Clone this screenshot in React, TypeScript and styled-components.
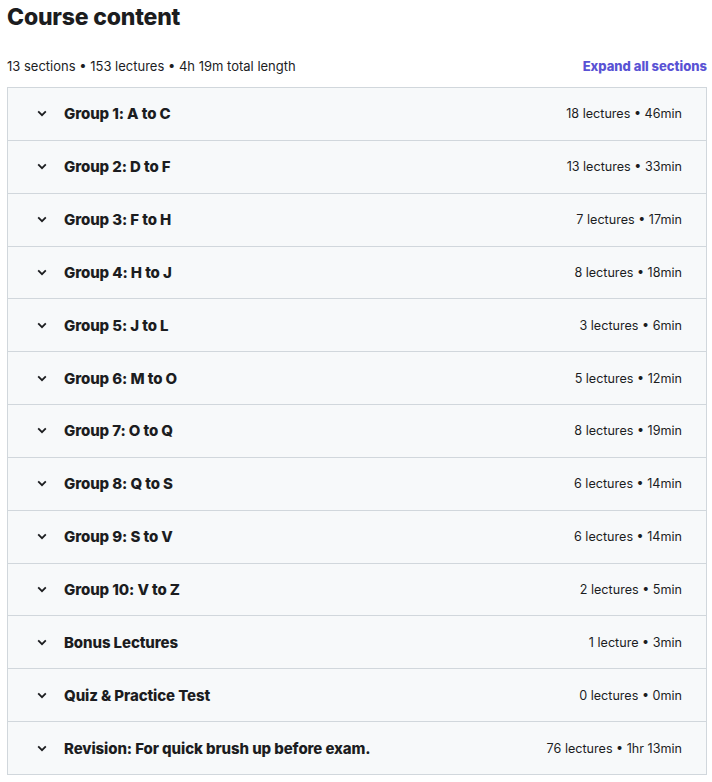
import React from "react";
import styled, { createGlobalStyle } from "styled-components";

interface ISection {
  title: string;
  meta: string;
}

const sections: ISection[] = [
  { title: "Group 1: A to C", meta: "18 lectures • 46min" },
  { title: "Group 2: D to F", meta: "13 lectures • 33min" },
  { title: "Group 3: F to H", meta: "7 lectures • 17min" },
  { title: "Group 4: H to J", meta: "8 lectures • 18min" },
  { title: "Group 5: J to L", meta: "3 lectures • 6min" },
  { title: "Group 6: M to O", meta: "5 lectures • 12min" },
  { title: "Group 7: O to Q", meta: "8 lectures • 19min" },
  { title: "Group 8: Q to S", meta: "6 lectures • 14min" },
  { title: "Group 9: S to V", meta: "6 lectures • 14min" },
  { title: "Group 10: V to Z", meta: "2 lectures • 5min" },
  { title: "Bonus Lectures", meta: "1 lecture • 3min" },
  { title: "Quiz & Practice Test", meta: "0 lectures • 0min" },
  { title: "Revision: For quick brush up before exam.", meta: "76 lectures • 1hr 13min" },
];

const GlobalStyle = createGlobalStyle`
  body {
    margin: 0;
    background: #fff;
    font-family: "Inter", "Liberation Sans", sans-serif;
    color: #1c1d1f;
  }
`;

const Wrapper = styled.div`
  padding: 0 5px 0 7px;
`;

const Title = styled.h2`
  margin: 0;
  padding-top: 3px;
  font-size: 23px;
  line-height: 28px;
  font-weight: 800;
  letter-spacing: -0.2px;
`;

const SummaryRow = styled.div`
  display: flex;
  justify-content: space-between;
  align-items: center;
  margin-top: 25px;
  height: 20px;
  margin-bottom: 11px;
  font-size: 13px;
`;

const ExpandLink = styled.button`
  border: none;
  background: none;
  padding: 0;
  font-family: inherit;
  font-size: 13px;
  font-weight: 800;
  color: #5952d4;
  cursor: pointer;
`;

const Accordion = styled.div`
  border: 1px solid #d1d7dc;
  border-bottom: none;
`;

const SectionRow = styled.div`
  display: flex;
  align-items: center;
  height: 51.85px;
  padding: 0 24px 0 26px;
  background: #f7f9fa;
  border-bottom: 1px solid #d1d7dc;
`;

const Chevron = styled.span`
  display: flex;
  width: 16px;
  justify-content: center;
  margin-right: 14px;
`;

const SectionTitle = styled.span`
  flex: 1;
  font-size: 15px;
  font-weight: 800;
  letter-spacing: -0.1px;
`;

const SectionMeta = styled.span`
  font-size: 12.6px;
`;

const ChevronIcon = () => (
  <svg width="10" height="7" viewBox="0 0 10 7" fill="none">
    <path d="M1.2 1.4L5 5.2L8.8 1.4" stroke="currentColor" strokeWidth="1.8" />
  </svg>
);

export default function App() {
  return (
    <Wrapper>
      <GlobalStyle />
      <Title>Course content</Title>
      <SummaryRow>
        <span>13 sections • 153 lectures • 4h 19m total length</span>
        <ExpandLink>Expand all sections</ExpandLink>
      </SummaryRow>
      <Accordion>
        {sections.map((s) => (
          <SectionRow key={s.title}>
            <Chevron>
              <ChevronIcon />
            </Chevron>
            <SectionTitle>{s.title}</SectionTitle>
            <SectionMeta>{s.meta}</SectionMeta>
          </SectionRow>
        ))}
      </Accordion>
    </Wrapper>
  );
}
